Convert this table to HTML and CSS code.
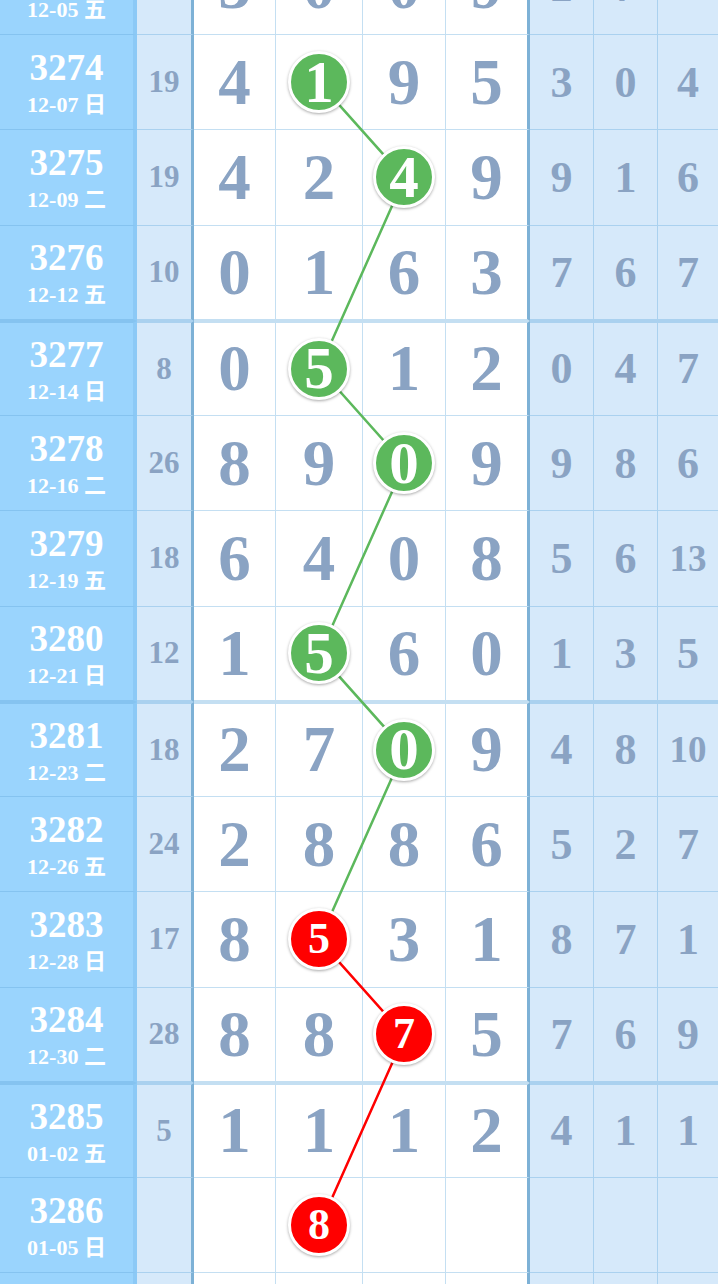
FILE: index.html
```html
<!DOCTYPE html>
<html lang="zh-CN">
<head>
    <meta charset="UTF-8">
    <meta name="viewport" content="width=device-width, initial-scale=1.0">
    <title>走势图</title>
    <link rel="stylesheet" href="styles.css">
</head>
<body>
    <div class="board">
        <!-- connecting lines between the hit balls -->
        <svg class="trend" width="718" height="1429" viewBox="0 0 718 1429">
            <polyline class="green" points="319.5,142.9 404.5,238.1 319.5,428.6 404.5,523.9 319.5,714.4 404.5,809.6 319.5,1000.1"/>
            <polyline class="red" points="319.5,1000.1 404.5,1095.4 319.5,1285.9"/>
        </svg>

        <div class="row">
            <div class="issue"><b>3273</b><span>12-05 五</span></div>
            <div class="sum">12</div>
            <div class="d d1">3</div><div class="d d2">0</div><div class="d d3">0</div><div class="d d4">9</div>
            <div class="r r1">2</div><div class="r r2">7</div><div class="r r3 small">11</div>
        </div>
        <div class="row">
            <div class="issue"><b>3274</b><span>12-07 日</span></div>
            <div class="sum">19</div>
            <div class="d d1">4</div><div class="d d2"><i class="ball g">1</i></div><div class="d d3">9</div><div class="d d4">5</div>
            <div class="r r1">3</div><div class="r r2">0</div><div class="r r3">4</div>
        </div>
        <div class="row">
            <div class="issue"><b>3275</b><span>12-09 二</span></div>
            <div class="sum">19</div>
            <div class="d d1">4</div><div class="d d2">2</div><div class="d d3"><i class="ball g">4</i></div><div class="d d4">9</div>
            <div class="r r1">9</div><div class="r r2">1</div><div class="r r3">6</div>
        </div>
        <div class="row end">
            <div class="issue"><b>3276</b><span>12-12 五</span></div>
            <div class="sum">10</div>
            <div class="d d1">0</div><div class="d d2">1</div><div class="d d3">6</div><div class="d d4">3</div>
            <div class="r r1">7</div><div class="r r2">6</div><div class="r r3">7</div>
        </div>
        <div class="row start">
            <div class="issue"><b>3277</b><span>12-14 日</span></div>
            <div class="sum">8</div>
            <div class="d d1">0</div><div class="d d2"><i class="ball g">5</i></div><div class="d d3">1</div><div class="d d4">2</div>
            <div class="r r1">0</div><div class="r r2">4</div><div class="r r3">7</div>
        </div>
        <div class="row">
            <div class="issue"><b>3278</b><span>12-16 二</span></div>
            <div class="sum">26</div>
            <div class="d d1">8</div><div class="d d2">9</div><div class="d d3"><i class="ball g">0</i></div><div class="d d4">9</div>
            <div class="r r1">9</div><div class="r r2">8</div><div class="r r3">6</div>
        </div>
        <div class="row">
            <div class="issue"><b>3279</b><span>12-19 五</span></div>
            <div class="sum">18</div>
            <div class="d d1">6</div><div class="d d2">4</div><div class="d d3">0</div><div class="d d4">8</div>
            <div class="r r1">5</div><div class="r r2">6</div><div class="r r3 small">13</div>
        </div>
        <div class="row end">
            <div class="issue"><b>3280</b><span>12-21 日</span></div>
            <div class="sum">12</div>
            <div class="d d1">1</div><div class="d d2"><i class="ball g">5</i></div><div class="d d3">6</div><div class="d d4">0</div>
            <div class="r r1">1</div><div class="r r2">3</div><div class="r r3">5</div>
        </div>
        <div class="row start">
            <div class="issue"><b>3281</b><span>12-23 二</span></div>
            <div class="sum">18</div>
            <div class="d d1">2</div><div class="d d2">7</div><div class="d d3"><i class="ball g">0</i></div><div class="d d4">9</div>
            <div class="r r1">4</div><div class="r r2">8</div><div class="r r3 small">10</div>
        </div>
        <div class="row">
            <div class="issue"><b>3282</b><span>12-26 五</span></div>
            <div class="sum">24</div>
            <div class="d d1">2</div><div class="d d2">8</div><div class="d d3">8</div><div class="d d4">6</div>
            <div class="r r1">5</div><div class="r r2">2</div><div class="r r3">7</div>
        </div>
        <div class="row">
            <div class="issue"><b>3283</b><span>12-28 日</span></div>
            <div class="sum">17</div>
            <div class="d d1">8</div><div class="d d2"><i class="ball r">5</i></div><div class="d d3">3</div><div class="d d4">1</div>
            <div class="r r1">8</div><div class="r r2">7</div><div class="r r3">1</div>
        </div>
        <div class="row end">
            <div class="issue"><b>3284</b><span>12-30 二</span></div>
            <div class="sum">28</div>
            <div class="d d1">8</div><div class="d d2">8</div><div class="d d3"><i class="ball r">7</i></div><div class="d d4">5</div>
            <div class="r r1">7</div><div class="r r2">6</div><div class="r r3">9</div>
        </div>
        <div class="row start">
            <div class="issue"><b>3285</b><span>01-02 五</span></div>
            <div class="sum">5</div>
            <div class="d d1">1</div><div class="d d2">1</div><div class="d d3">1</div><div class="d d4">2</div>
            <div class="r r1">4</div><div class="r r2">1</div><div class="r r3">1</div>
        </div>
        <div class="row">
            <div class="issue"><b>3286</b><span>01-05 日</span></div>
            <div class="sum"></div>
            <div class="d d1"></div><div class="d d2"><i class="ball r">8</i></div><div class="d d3"></div><div class="d d4"></div>
            <div class="r r1"></div><div class="r r2"></div><div class="r r3"></div>
        </div>
        <div class="row">
            <div class="issue"></div>
            <div class="sum"></div>
            <div class="d d1"></div><div class="d d2"></div><div class="d d3"></div><div class="d d4"></div>
            <div class="r r1"></div><div class="r r2"></div><div class="r r3"></div>
        </div>
    </div>
</body>
</html>
```

FILE: styles.css
```css
*{
    margin: 0;
    padding: 0;
    box-sizing: border-box;
}
html, body{
    overflow: hidden;
}
body{
    font-family: "Liberation Serif", "Noto Sans CJK SC", serif;
    font-weight: bold;
    background: #fff;
}
.board{
    position: relative;
    width: 718px;
    margin-top: -60.25px;
}
.trend{
    position: absolute;
    left: 0;
    top: 0;
    z-index: 1;
}
.trend polyline{
    fill: none;
    stroke-width: 2.5;
}
.trend .green{
    stroke: #5cb85c;
}
.trend .red{
    stroke: #f00;
}
.row{
    display: flex;
    height: 95.25px;
}
.row > div{
    flex: none;
    display: flex;
    align-items: center;
    justify-content: center;
    border-bottom: 1px solid rgba(100, 170, 220, 0.38);
    border-right: 1px solid rgba(100, 170, 220, 0.38);
    color: #8aa3c3;
}
.row.end > div{
    border-bottom-width: 2px;
}
.row.start > div{
    border-top: 2px solid rgba(100, 170, 220, 0.38);
}
.row .issue{
    width: 137px;
    flex-direction: column;
    background: #9ad4fd;
    color: #fff;
    border-right: 4px solid rgba(60, 140, 210, 0.15);
}
.issue b{
    font-size: 37px;
    line-height: 46px;
}
.issue span{
    font-size: 22px;
    line-height: 28px;
}
.row .sum{
    width: 57px;
    background: #d6e9fa;
    font-size: 31px;
    border-right: 3px solid #7db1d6;
}
.row .d{
    background: #fff;
    font-size: 65px;
}
.row .d1{ width: 82px; }
.row .d2{ width: 87px; }
.row .d3{ width: 83px; }
.row .d4{
    width: 84px;
    border-right: 3px solid #7db1d6;
}
.row .r{
    background: #d6e9fa;
    font-size: 44px;
}
.row .r1{ width: 64px; }
.row .r2{ width: 64px; }
.row .r3{ width: 60px; border-right: none; }
.row .small{
    font-size: 37px;
}
.ball{
    position: relative;
    z-index: 2;
    display: flex;
    align-items: center;
    justify-content: center;
    width: 62px;
    height: 62px;
    border-radius: 50%;
    border: 3px solid #fff;
    box-shadow: 0 1px 3px rgba(0, 0, 0, 0.35);
    color: #fff;
    font-size: 59px;
    font-style: normal;
    line-height: 1;
}
.ball.g{
    background: #5cb85c;
}
.ball.r{
    background: #f00;
}
```
